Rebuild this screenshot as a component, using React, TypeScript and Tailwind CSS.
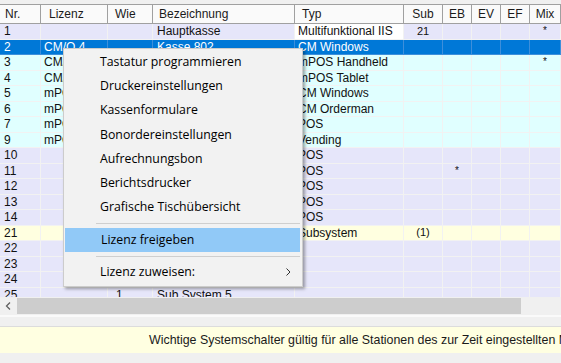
import React from "react";

type Row = {
  nr: string;
  liz?: string;
  wie?: string;
  bez?: string;
  typ?: string;
  sub?: string;
  eb?: string;
  mix?: string;
  kind: "lav" | "cyan" | "yel" | "sel";
  typWhite?: boolean;
  nrRed?: boolean;
};

const rows: Row[] = [
  { nr: "1", bez: "Hauptkasse", typ: "Multifunktional IIS", sub: "21", mix: "*", kind: "lav", typWhite: true },
  { nr: "2", liz: "CM/O 4", bez: "Kasse 802", typ: "CM Windows", kind: "sel" },
  { nr: "3", liz: "CM/O 5", typ: "mPOS Handheld", mix: "*", kind: "cyan" },
  { nr: "4", liz: "CM/O 6", typ: "mPOS Tablet", kind: "cyan" },
  { nr: "5", liz: "mPOS 1", typ: "CM Windows", kind: "cyan" },
  { nr: "6", liz: "mPOS 2", typ: "CM Orderman", kind: "cyan" },
  { nr: "7", liz: "mPOS 3", typ: "POS", kind: "cyan" },
  { nr: "9", liz: "mPOS 4", typ: "Vending", kind: "cyan" },
  { nr: "10", typ: "POS", kind: "lav" },
  { nr: "11", typ: "POS", eb: "*", kind: "lav" },
  { nr: "12", typ: "POS", kind: "lav" },
  { nr: "13", typ: "POS", kind: "lav" },
  { nr: "14", typ: "POS", kind: "lav" },
  { nr: "21", typ: "Subsystem", sub: "(1)", kind: "yel", nrRed: true },
  { nr: "22", kind: "lav" },
  { nr: "23", kind: "lav" },
  { nr: "24", kind: "lav" },
  { nr: "25", wie: "1", bez: "Sub System 5", kind: "lav" },
];

const bgFor: Record<Row["kind"], string> = {
  lav: "bg-[#e6e6fa]",
  cyan: "bg-[#e0ffff]",
  yel: "bg-[#ffffe0]",
  sel: "bg-[#0078d7]",
};

const cols = "grid grid-cols-[41px_67px_45px_142px_109px_39px_29px_29px_29px_31px]";

function HeaderCell({ children, className = "" }: { children?: React.ReactNode; className?: string }) {
  return (
    <div className={`h-full flex items-center border-r border-[#a0a0a0] overflow-hidden whitespace-nowrap text-[#1a1a1a] ${className}`}>
      {children}
    </div>
  );
}

function MenuItem({ label, active, arrow }: { label: string; active?: boolean; arrow?: boolean }) {
  return (
    <div
      className={`h-[24.3px] flex items-center pl-[36px] pr-[11px] text-black ${
        active ? "bg-[#91c9f7] ml-[1px] mr-[2px] pl-[35px] pr-[9px]" : ""
      }`}
    >
      <span className="flex-1">{label}</span>
      {arrow && (
        <svg width="5" height="8" viewBox="0 0 5 8">
          <polyline points="0.5,0.5 4,4 0.5,7.5" fill="none" stroke="#333" strokeWidth="1" />
        </svg>
      )}
    </div>
  );
}

function Sep() {
  return (
    <div className="h-[8px] flex items-center ml-[32px] mr-[2px]">
      <div className="w-full border-t border-[#cfcfcf]" />
    </div>
  );
}

export default function App() {
  return (
    <div className="relative w-[561px] h-[363px] overflow-hidden bg-[#f0f0f0] font-['Liberation_Sans',Arial,sans-serif] text-[12px] leading-none">
      <div className="h-[4px] bg-[#f0f0f0]" />
      <div className="h-[293px] overflow-hidden bg-white">
        <div className={`${cols} h-[20px] border-t border-b border-[#a0a0a0] bg-[#fafafa]`}>
          <HeaderCell className="pl-[5px]">Nr.</HeaderCell>
          <HeaderCell className="pl-[8px]">Lizenz</HeaderCell>
          <HeaderCell className="pl-[7px]">Wie</HeaderCell>
          <HeaderCell className="pl-[6px]">Bezeichnung</HeaderCell>
          <HeaderCell className="pl-[7px]">Typ</HeaderCell>
          <HeaderCell className="justify-center">Sub</HeaderCell>
          <HeaderCell className="justify-center">EB</HeaderCell>
          <HeaderCell className="justify-center">EV</HeaderCell>
          <HeaderCell className="justify-center">EF</HeaderCell>
          <HeaderCell className="justify-center">Mix</HeaderCell>
        </div>
        {rows.map((r) => {
          const bg = bgFor[r.kind];
          const sel = r.kind === "sel";
          const txt = sel ? "text-white" : "text-[#111]";
          const cell = `h-[15.5px] flex items-center overflow-hidden whitespace-nowrap border-r border-b ${
            sel ? "border-[#3d8fdb]" : "border-[#f2f2f2]"
          } ${txt}`;
          return (
            <div key={r.nr} className={`${cols}`}>
              <div className={`${cell} ${bg} pl-[4px] ${r.nrRed ? "text-[#6b1d2e]" : ""}`}>{r.nr}</div>
              <div className={`${cell} ${bg} pl-[3px]`}>{r.liz}</div>
              <div className={`${cell} ${bg} pl-[8px]`}>{r.wie}</div>
              <div className={`${cell} ${bg} pl-[4px]`}>{r.bez}</div>
              <div className={`${cell} ${r.typWhite ? "bg-white" : bg} pl-[3px]`}>{r.typ}</div>
              <div className={`${cell} ${bg} justify-center text-[11px]`}>{r.sub}</div>
              <div className={`${cell} ${bg} justify-center text-[10px]`}>{r.eb}</div>
              <div className={`${cell} ${bg}`} />
              <div className={`${cell} ${bg}`} />
              <div className={`${cell} ${bg} justify-center text-[10px]`}>{r.mix}</div>
            </div>
          );
        })}
      </div>
      {/* horizontal scrollbar */}
      <div className="h-[18px] flex bg-[#f0f0f0]">
        <div className="w-[17px] flex items-center justify-center">
          <svg width="7" height="8" viewBox="0 0 7 8">
            <polyline points="5,0.5 1.5,4 5,7.5" fill="none" stroke="#606060" strokeWidth="1.3" />
          </svg>
        </div>
        <div className="w-[504px] h-[16px] mt-[1px] bg-[#cdcdcd]" />
        <div className="flex-1 bg-[#f0f0f0]" />
      </div>
      <div className="h-[2px] bg-[#fafafa]" />
      <div className="h-[10px] bg-[#f0f0f0] border-b border-[#dcdcdc]" />
      <div className="h-[26px] bg-[#ffffe1] flex items-center pl-[149px] whitespace-nowrap text-[#1a1a1a] text-[12.4px]">
        Wichtige Systemschalter gültig für alle Stationen des zur Zeit eingestellten Mandanten
      </div>
      <div className="h-[10px] bg-[#f0f0f0]" />

      {/* context menu */}
      <div className="absolute left-[63px] top-[48px] w-[240px] bg-[#f2f2f2] border border-[#cccccc] shadow-[2px_2px_3px_rgba(0,0,0,0.35)] pt-[0.7px] pb-[2px] font-['Open_Sans',sans-serif] text-[12.3px]">
        <MenuItem label="Tastatur programmieren" />
        <MenuItem label="Druckereinstellungen" />
        <MenuItem label="Kassenformulare" />
        <MenuItem label="Bonordereinstellungen" />
        <MenuItem label="Aufrechnungsbon" />
        <MenuItem label="Berichtsdrucker" />
        <MenuItem label="Grafische Tischübersicht" />
        <Sep />
        <MenuItem label="Lizenz freigeben" active />
        <Sep />
        <MenuItem label="Lizenz zuweisen:" arrow />
      </div>
    </div>
  );
}
